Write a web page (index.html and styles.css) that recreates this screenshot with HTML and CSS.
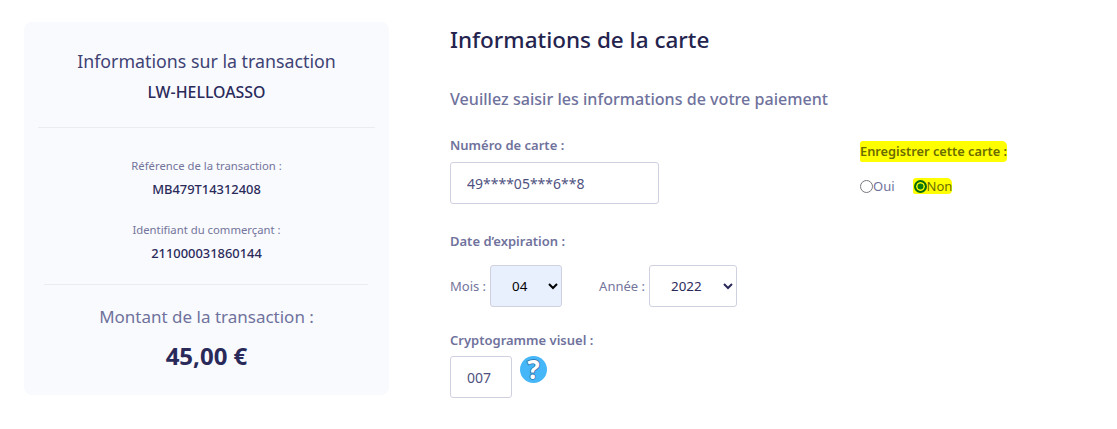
FILE: index.html
```html
<!DOCTYPE html>
<html lang="fr">
<head>
    <meta charset="UTF-8">
    <meta name="viewport" content="width=device-width, initial-scale=1.0">
    <title>Informations de la carte</title>
    <link rel="stylesheet" href="styles.css">
</head>
<body>
    <div class="page">
        <aside class="recap">
            <h2 class="recap-title">Informations sur la transaction</h2>
            <div class="recap-shop">LW-HELLOASSO</div>
            <hr class="sep sep-top">
            <div class="recap-label first">Référence de la transaction :</div>
            <div class="recap-value">MB479T14312408</div>
            <div class="recap-label second">Identifiant du commerçant :</div>
            <div class="recap-value">211000031860144</div>
            <hr class="sep sep-bottom">
            <div class="amount-label">Montant de la transaction :</div>
            <div class="amount">45,00 €</div>
        </aside>

        <main class="card-form">
            <h1>Informations de la carte</h1>
            <h3>Veuillez saisir les informations de votre paiement</h3>

            <div class="columns">
                <div class="fields">
                    <label class="field-label" for="numero">Numéro de carte :</label>
                    <input class="text-input card-number" id="numero" type="text" value="49****05***6**8">

                    <div class="field-label date-label">Date d’expiration :</div>
                    <div class="date-row">
                        <label class="inline-label" for="mois">Mois :</label>
                        <select class="select month" id="mois">
                            <option>04</option>
                        </select>
                        <label class="inline-label year-label" for="annee">Année :</label>
                        <select class="select year" id="annee">
                            <option>2022</option>
                        </select>
                    </div>

                    <label class="field-label crypto-label" for="crypto">Cryptogramme visuel :</label>
                    <div class="crypto-row">
                        <input class="text-input crypto" id="crypto" type="text" value="007">
                        <span class="help">?</span>
                    </div>
                </div>

                <div class="save-card">
                    <div class="save-title"><span class="marker">Enregistrer cette carte :</span></div>
                    <div class="save-options">
                        <label class="radio-option">
                            <span class="radio"></span>Oui
                        </label>
                        <label class="radio-option marker marker-non">
                            <span class="radio checked"></span>Non
                        </label>
                    </div>
                </div>
            </div>
        </main>
    </div>
</body>
</html>
```

FILE: styles.css
```css
body {
    font-family: "Noto Sans", "Open Sans", sans-serif;
    background-color: white;
    color: #2a2a5a;
    margin: 0;
    padding: 0;
}
.page {
    display: flex;
    align-items: flex-start;
    height: 429px;
    overflow: hidden;
}
.recap {
    box-sizing: border-box;
    width: 365px;
    height: 373px;
    margin: 22px 0 0 24px;
    padding-top: 26px;
    background-color: #f9fafe;
    border-radius: 8px;
    text-align: center;
}
.recap-title {
    margin: 0;
    font-size: 17.8px;
    font-weight: 400;
    line-height: 26px;
    color: #3f4374;
}
.recap-shop {
    margin-top: 8px;
    font-size: 15.9px;
    font-weight: 500;
    line-height: 20px;
}
.sep {
    border: none;
    border-top: 1px solid #ebecf2;
    margin: 0;
}
.sep-top {
    margin: 25px 14px 0;
}
.sep-bottom {
    margin: 22px 21px 0 20px;
}
.recap-label {
    font-size: 11.3px;
    line-height: 17px;
    color: #73759b;
}
.recap-label.first {
    margin-top: 29px;
}
.recap-label.second {
    margin-top: 23px;
}
.recap-value {
    margin-top: 6px;
    font-size: 12.9px;
    font-weight: 500;
    line-height: 18px;
}
.amount-label {
    margin-top: 20px;
    font-size: 17px;
    line-height: 24px;
    color: #6f729c;
}
.amount {
    margin-top: 12px;
    font-size: 24px;
    font-weight: 700;
    line-height: 30px;
}
.card-form {
    flex: 1;
    padding: 25px 0 0 61px;
}
h1 {
    margin: 0;
    font-size: 22.5px;
    font-weight: 500;
    line-height: 30px;
    color: #24244f;
}
h3 {
    margin: 32px 0 0;
    font-size: 16.1px;
    font-weight: 500;
    line-height: 24px;
    color: #6f729c;
}
.columns {
    display: flex;
    margin-top: 25px;
}
.fields {
    width: 410px;
}
.field-label {
    display: block;
    font-size: 13px;
    font-weight: 600;
    line-height: 18px;
    color: #6f729c;
}
.text-input {
    display: block;
    box-sizing: border-box;
    height: 42px;
    margin-top: 8px;
    padding: 0 16px;
    background-color: white;
    border: 1px solid #d0d1e0;
    border-radius: 3px;
    font-family: inherit;
    font-size: 14px;
    color: #4f5280;
}
.card-number {
    width: 209px;
}
.date-label {
    margin-top: 28px;
}
.date-row {
    display: flex;
    align-items: center;
    margin-top: 15px;
}
.inline-label {
    font-size: 13px;
    color: #73759b;
    margin-right: 4px;
}
.year-label {
    margin-left: 37px;
}
.select {
    box-sizing: border-box;
    height: 42px;
    padding: 0 0 0 17px;
    border: 1px solid #d0d1e0;
    border-radius: 3px;
    background-color: white;
    font-family: inherit;
    font-size: 13.33px;
    color: #2a2a5a;
}
.month {
    width: 72px;
    background-color: #e8f0fe;
    color: black;
}
.year {
    width: 88px;
}
.crypto-label {
    margin-top: 24px;
}
.crypto-row {
    display: flex;
    align-items: flex-start;
}
.crypto {
    width: 62px;
    margin-top: 7px;
}
.help {
    width: 27px;
    height: 27px;
    margin: 7px 0 0 8px;
    border-radius: 50%;
    background-color: #45b6f7;
    color: white;
    font-size: 26px;
    font-weight: 700;
    line-height: 27px;
    text-align: center;
    -webkit-text-stroke: 1.5px #2a6aa8;
    paint-order: stroke fill;
}
.save-title {
    margin-top: 6px;
    font-size: 12.8px;
    font-weight: 600;
    line-height: 18px;
    color: #6b6b00;
}
.marker {
    background-color: #ffff00;
    border-radius: 3px 5px 4px 2px;
}
.save-title .marker {
    padding: 1px 0 2px;
}
.save-options {
    display: flex;
    margin-top: 18px;
    font-size: 13px;
    line-height: 16px;
    color: #6f729c;
}
.radio-option {
    display: flex;
    align-items: center;
}
.marker-non {
    margin-left: 18px;
    padding-left: 1px;
    color: #6b6b00;
}
.radio {
    box-sizing: border-box;
    width: 13px;
    height: 13px;
    border: 1px solid #77777f;
    border-radius: 50%;
    background-color: white;
}
.radio.checked {
    border: 2px solid #0a6a0a;
    background-color: #0f7a0f;
    box-shadow: inset 0 0 0 1.5px #ffff00;
}
```
